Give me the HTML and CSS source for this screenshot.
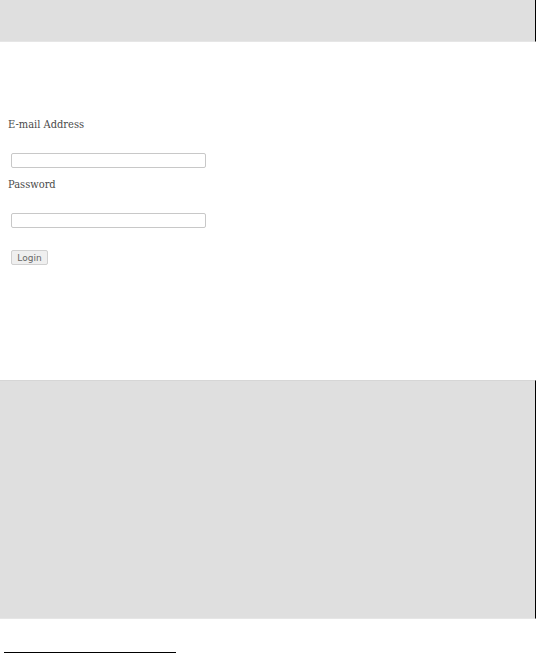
FILE: index.html
```html
<!DOCTYPE html>
<html lang="en">
<head>
    <meta charset="UTF-8">
    <title>Login</title>
    <link rel="stylesheet" href="styles.css">
</head>
<body>
    <header class="top_bar"></header>

    <main class="login_wrap">
        <form class="login_form">
            <label class="login_label" for="email">E-mail Address</label>
            <input class="login_input" type="text" id="email">

            <label class="login_label" for="pass">Password</label>
            <input class="login_input" type="password" id="pass">

            <button type="submit" class="login_btn">Login</button>
        </form>
    </main>

    <section class="info_box"></section>

    <div class="foot_rule"></div>
</body>
</html>
```

FILE: styles.css
```css
* {
    margin: 0;
    padding: 0;
    box-sizing: border-box;
}

body {
    font-family: "DejaVu Serif", serif;
    background: white;
    color: #444;
    width: 537px;
}

.top_bar {
    height: 42px;
    width: 536px;
    background: #dfdfdf;
    border-bottom: 1px solid #e6e6e6;
    border-right: 1px solid #000;
}

.login_wrap {
    padding: 76px 0 0 8px;
    height: 338px;
}

.login_form {
    display: flex;
    flex-direction: column;
    align-items: flex-start;
}

.login_label {
    font-size: 11px;
    font-stretch: condensed;
    line-height: 14px;
    color: #4a4a4a;
}

.login_input {
    width: 195px;
    height: 15px;
    margin: 21px 0 10px 3px;
    border: 1px solid #c8c8c8;
    border-radius: 2px;
    background: white;
}

.login_btn {
    margin: 12px 0 0 3px;
    height: 15px;
    width: 37px;
    padding: 0;
    font-family: "DejaVu Sans", sans-serif;
    font-size: 9px;
    color: #666;
    background: #efefef;
    border: 1px solid #d0d0d0;
    border-radius: 2px;
}

.info_box {
    height: 239px;
    width: 536px;
    background: #dfdfdf;
    border-top: 1px solid #d6d6d6;
    border-bottom: 1px solid #e6e6e6;
    border-right: 1px solid #000;
}

.foot_rule {
    margin: 33px 0 0 4px;
    width: 172px;
    border-top: 1px solid #000;
}
```
